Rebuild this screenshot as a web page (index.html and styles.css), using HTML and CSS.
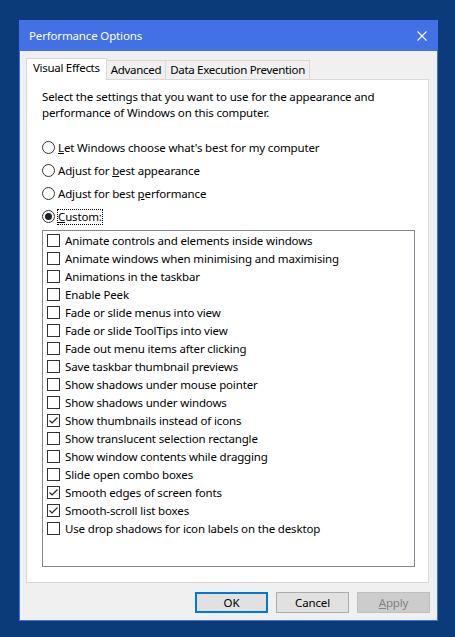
FILE: index.html
```html
<!DOCTYPE html>
<html lang="en">
<head>
<meta charset="utf-8">
<title>Performance Options</title>
<link rel="stylesheet" href="styles.css">
</head>
<body>
<div class="dialog">
  <div class="titlebar">
    <span class="title">Performance Options</span>
    <svg class="close" width="10" height="10" viewBox="0 0 10 10"><path d="M0.5 0.5 L9.5 9.5 M9.5 0.5 L0.5 9.5" stroke="#fff" stroke-width="1.1" fill="none"/></svg>
  </div>
  <div class="body">
    <div class="tabs">
      <div class="tab active">Visual Effects</div>
      <div class="tab">Advanced</div>
      <div class="tab">Data Execution Prevention</div>
    </div>
    <div class="panel">
      <p class="intro">Select the settings that you want to use for the appearance and<br>performance of Windows on this computer.</p>
      <div class="radios">
        <div class="radio"><span class="circle"></span><span><u>L</u>et Windows choose what's best for my computer</span></div>
        <div class="radio"><span class="circle"></span><span>Adjust for <u>b</u>est appearance</span></div>
        <div class="radio"><span class="circle"></span><span>Adjust for best <u>p</u>erformance</span></div>
        <div class="radio"><span class="circle on"></span><span class="focus"><u>C</u>ustom:</span></div>
      </div>
      <div class="list">
        <div class="item"><span class="box"></span>Animate controls and elements inside windows</div>
        <div class="item"><span class="box"></span>Animate windows when minimising and maximising</div>
        <div class="item"><span class="box"></span>Animations in the taskbar</div>
        <div class="item"><span class="box"></span>Enable Peek</div>
        <div class="item"><span class="box"></span>Fade or slide menus into view</div>
        <div class="item"><span class="box"></span>Fade or slide ToolTips into view</div>
        <div class="item"><span class="box"></span>Fade out menu items after clicking</div>
        <div class="item"><span class="box"></span>Save taskbar thumbnail previews</div>
        <div class="item"><span class="box"></span>Show shadows under mouse pointer</div>
        <div class="item"><span class="box"></span>Show shadows under windows</div>
        <div class="item"><span class="box"><svg width="11" height="11" viewBox="0 0 11 11"><path d="M1.5 5.5 L4 8 L9.5 2.5" stroke="#222" stroke-width="1.2" fill="none"/></svg></span>Show thumbnails instead of icons</div>
        <div class="item"><span class="box"></span>Show translucent selection rectangle</div>
        <div class="item"><span class="box"></span>Show window contents while dragging</div>
        <div class="item"><span class="box"></span>Slide open combo boxes</div>
        <div class="item"><span class="box"><svg width="11" height="11" viewBox="0 0 11 11"><path d="M1.5 5.5 L4 8 L9.5 2.5" stroke="#222" stroke-width="1.2" fill="none"/></svg></span>Smooth edges of screen fonts</div>
        <div class="item"><span class="box"><svg width="11" height="11" viewBox="0 0 11 11"><path d="M1.5 5.5 L4 8 L9.5 2.5" stroke="#222" stroke-width="1.2" fill="none"/></svg></span>Smooth-scroll list boxes</div>
        <div class="item"><span class="box"></span>Use drop shadows for icon labels on the desktop</div>
      </div>
    </div>
    <div class="buttons">
      <button class="btn default">OK</button>
      <button class="btn">Cancel</button>
      <button class="btn disabled"><u>A</u>pply</button>
    </div>
  </div>
</div>
</body>
</html>
```
FILE: styles.css
```css
html, body {
  margin: 0;
  padding: 0;
}
body {
  background: #0c3b7a;
  width: 455px;
  height: 637px;
  overflow: hidden;
  font-family: "Noto Sans", "Open Sans", sans-serif;
  font-size: 11.5px;
  letter-spacing: -0.15px;
  color: #000;
  padding-top: 20px;
  box-sizing: border-box;
}
.dialog {
  margin-left: 19px;
  width: 419px;
  height: 601px;
  box-sizing: border-box;
  border: 1px solid #4271e6;
  background: #f0f0f0;
  display: flex;
  flex-direction: column;
}
.titlebar {
  height: 30px;
  flex: none;
  box-sizing: border-box;
  background: #4271e6;
  color: #fff;
  display: flex;
  align-items: center;
  justify-content: space-between;
  padding: 0 10px 2px 9px;
}
.title {
  font-size: 11.5px;
}
.close {
  display: block;
  margin-top: 2px;
}
.body {
  flex: 1;
  display: flex;
  flex-direction: column;
  padding: 7px 7px 0 6px;
}
.tabs {
  display: flex;
  align-items: flex-end;
  height: 22px;
  margin-bottom: -1px;
  position: relative;
  z-index: 1;
  flex: none;
}
.tab {
  height: 19px;
  box-sizing: border-box;
  margin-bottom: 1px;
  padding: 0 4px;
  border-top: 1px solid #d9d9d9;
  border-right: 1px solid #d9d9d9;
  background: #f0f0f0;
  display: flex;
  align-items: center;
  line-height: 1;
  letter-spacing: -0.3px;
}
.tab.active {
  height: 22px;
  margin-bottom: 0;
  padding: 0 6px 3px 6px;
  background: #fff;
  border-left: 1px solid #d9d9d9;
}
.panel {
  flex: 1;
  margin-right: 1px;
  background: #fff;
  border: 1px solid #d9d9d9;
  padding: 9px 13px 15px 15px;
  display: flex;
  flex-direction: column;
}
.intro {
  margin: 0;
  line-height: 16px;
}
.radios {
  margin-top: 15px;
}
.radio {
  height: 23px;
  display: flex;
  align-items: center;
}
.circle {
  width: 13px;
  height: 13px;
  box-sizing: border-box;
  border: 1px solid #333;
  border-radius: 50%;
  margin-right: 3px;
  display: flex;
  align-items: center;
  justify-content: center;
  flex: none;
}
.circle.on::after {
  content: "";
  width: 7px;
  height: 7px;
  border-radius: 50%;
  background: #222;
}
.focus {
  outline: 1px dotted #000;
  outline-offset: 0;
  line-height: 14px;
}
.list {
  margin-top: 2px;
  flex: 1;
  border: 1px solid #828790;
  background: #fff;
  padding-left: 4px;
}
.item {
  height: 18px;
  display: flex;
  align-items: center;
  white-space: nowrap;
}
.box {
  width: 13px;
  height: 13px;
  box-sizing: border-box;
  border: 1px solid #333;
  background: #fff;
  margin-right: 5px;
  flex: none;
  display: flex;
  align-items: center;
  justify-content: center;
}
.box svg {
  display: block;
}
.buttons {
  display: flex;
  justify-content: flex-end;
  gap: 8px;
  margin: 9px 0 7px;
  flex: none;
}
.btn {
  width: 73px;
  height: 21px;
  box-sizing: border-box;
  border: 1px solid #adadad;
  background: #e1e1e1;
  font-family: inherit;
  font-size: 11.5px;
  letter-spacing: -0.15px;
  color: #000;
  padding: 0;
  line-height: 1;
}
.btn.default {
  border: 1px solid #0078d7;
  box-shadow: inset 0 0 0 1px #0078d7;
}
.btn.disabled {
  background: #cccccc;
  border-color: #bfbfbf;
  color: #838383;
}
```
